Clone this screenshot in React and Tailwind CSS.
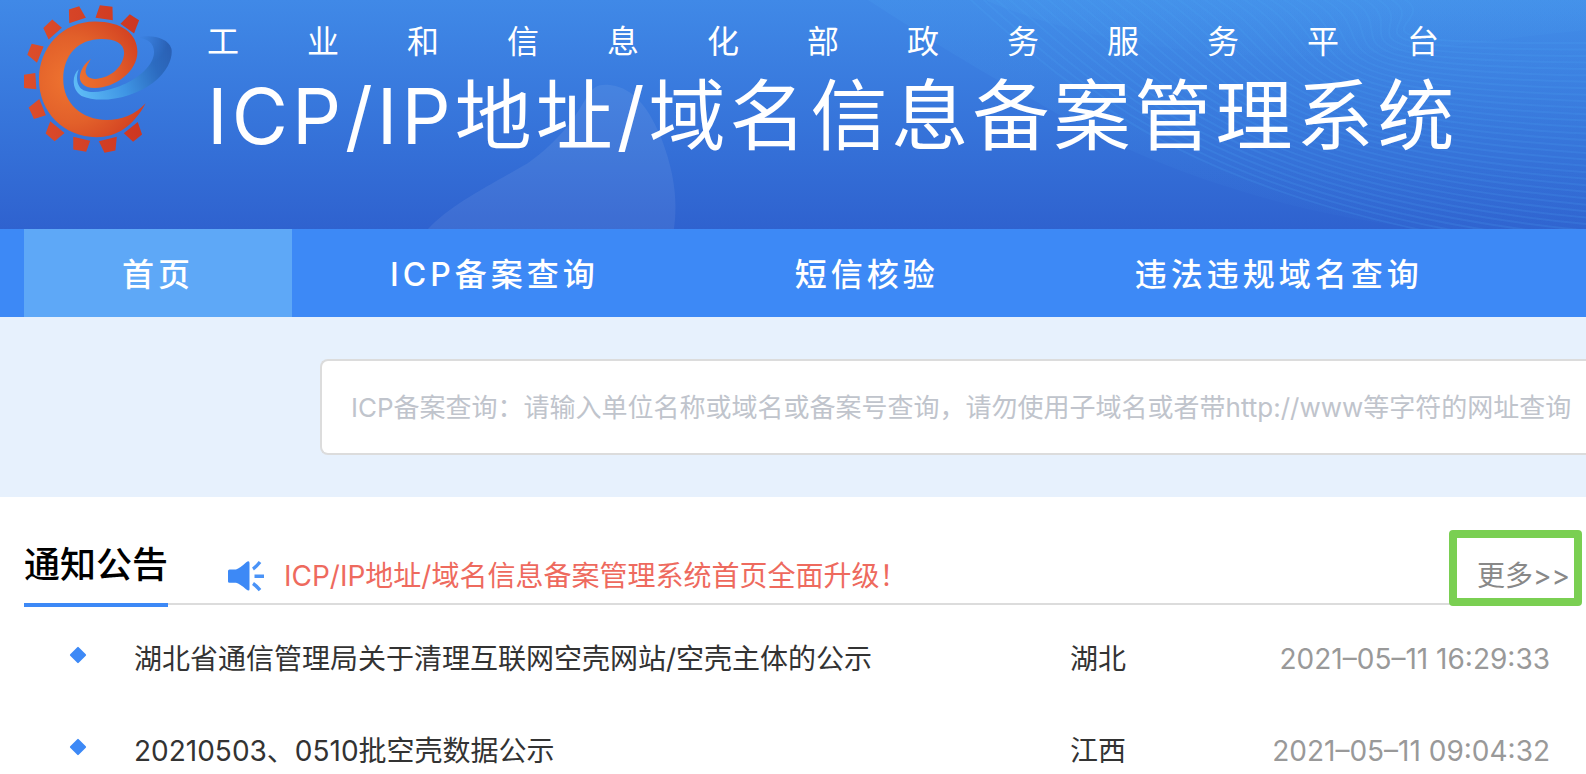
import React from "react";

const NAV_ITEMS = ["首页", "ICP备案查询", "短信核验", "违法违规域名查询"];

const NOTICES = [
  {
    title: "湖北省通信管理局关于清理互联网空壳网站/空壳主体的公示",
    region: "湖北",
    time: "2021–05–11 16:29:33",
  },
  {
    title: "20210503、0510批空壳数据公示",
    region: "江西",
    time: "2021–05–11 09:04:32",
  },
];

// Gear teeth around the "e"
const TEETH = [
  "207,28 238,18 258,53 208,69",
  "300,15 338,20 339,60 287,53",
  "390,42 418,60 403,100 362,71",
  "130,84 157,58 186,83 146,118",
  "95,131 131,139 111,188 82,164",
  "72,224 106,219 109,268 72,264",
  "86,323 118,297 138,346 102,357",
  "151,364 194,399 164,424 137,401",
  "220,411 271,423 259,456 220,449",
  "297,424 351,411 347,452 314,459",
  "372,400 414,366 427,404 400,426",
];

const Logo = () => (
  <svg viewBox="72 12 448 450" className="w-[149px] h-[150px] shrink-0" aria-hidden="true">
    <defs>
      <radialGradient id="body" gradientUnits="userSpaceOnUse" cx="210" cy="240" r="260">
        <stop offset="0" stopColor="#ef7430" />
        <stop offset="0.5" stopColor="#e2602a" />
        <stop offset="1" stopColor="#cf3a20" />
      </radialGradient>
      <linearGradient id="teeth" gradientUnits="userSpaceOnUse" x1="72" y1="240" x2="430" y2="240">
        <stop offset="0" stopColor="#dc4e2b" />
        <stop offset="1" stopColor="#cd3621" />
      </linearGradient>
      <linearGradient id="swoosh" gradientUnits="userSpaceOnUse" x1="220" y1="260" x2="516" y2="150">
        <stop offset="0" stopColor="#5fbdf7" />
        <stop offset="0.45" stopColor="#3f95e4" />
        <stop offset="0.8" stopColor="#2c6bc0" />
        <stop offset="1" stopColor="#2a60b4" />
      </linearGradient>
      <radialGradient id="fade" gradientUnits="userSpaceOnUse" cx="412" cy="106" r="95">
        <stop offset="0.1" stopColor="#000" />
        <stop offset="1" stopColor="#fff" />
      </radialGradient>
      <mask id="swoosh-mask">
        <rect x="0" y="0" width="600" height="500" fill="url(#fade)" />
      </mask>
    </defs>
    {TEETH.map((points) => (
      <polygon key={points} points={points} fill="url(#teeth)" />
    ))}
    <path
      fill="url(#swoosh)"
      mask="url(#swoosh-mask)"
      d="M237 208 C215 225 215 270 245 288 C300 312 400 295 460 248 C510 210 520 165 515 145 C505 115 460 102 412 112 C445 115 464 130 463 158 C460 205 400 245 350 262 C300 280 255 282 240 262 C228 245 230 225 237 208Z"
    />
    <path
      fill="url(#body)"
      d="M438 310 C400 380 350 412 290 412 C190 412 117 335 117 238 C117 140 190 64 285 64 C365 64 413 100 413 155 C413 215 345 264 285 264 C250 264 238 245 240 228 C243 205 260 185 273 177 C262 195 255 208 258 220 C262 235 280 240 300 235 C340 228 372 195 373 158 C373 130 345 117 305 117 C235 117 190 165 190 238 C190 310 245 360 320 360 C365 360 405 345 438 310Z"
    />
  </svg>
);

// Mesh of thin curves fanning out to the right
const WAVES = Array.from({ length: 34 }, (_, i) => {
  const t = i / 33;
  const x = 960 + 420 * t;
  return `M${x} -10 C${x + 110} ${90 - 70 * t} ${1200 + 60 * t} ${215 - 170 * t} 1600 ${258 - 215 * t}`;
});

const HeaderArt = () => (
  <svg
    viewBox="0 0 1586 229"
    preserveAspectRatio="none"
    className="absolute inset-0 w-full h-full"
    aria-hidden="true"
  >
    <defs>
      <linearGradient id="glow" x1="0" y1="0" x2="0" y2="1">
        <stop offset="0" stopColor="#4fa8f2" stopOpacity="0.16" />
        <stop offset="1" stopColor="#4fa8f2" stopOpacity="0.03" />
      </linearGradient>
    </defs>
    <path
      fill="#fff"
      fillOpacity="0.07"
      d="M428 229 C450 205 490 185 528 163 C560 140 575 118 586 98 C594 85 600 84 610 85 C635 88 650 110 662 140 C674 172 678 200 674 229Z"
    />
    <path fill="url(#glow)" d="M868 0 C930 40 975 68 1030 98 C1150 170 1290 215 1430 229 H1586 V0Z" />
    <path fill="url(#glow)" d="M985 0 C1060 32 1160 52 1260 56 C1380 60 1480 40 1586 30 V0Z" />
    <g fill="none" stroke="#4ba6f2" strokeWidth="2" strokeOpacity="0.18">
      {WAVES.map((d) => (
        <path key={d} d={d} />
      ))}
    </g>
  </svg>
);

const Megaphone = () => (
  <svg viewBox="0 0 36 32" className="w-9 h-8 shrink-0" aria-hidden="true">
    <path
      fill="#3d89f6"
      d="M1.5 9.5H8Q12 8 18 2.4Q21.5 0 21.5 3V29Q21.5 32 18 29.2Q12 24 8 22.8H1.5Q0 22.8 0 21.5V11Q0 9.5 1.5 9.5Z"
    />
    <path
      stroke="#4a93f7"
      strokeWidth="3.4"
      fill="none"
      d="M25 9Q28 7 32 2M26.5 16.2H36M25 23.5Q28 25.5 32 30.2"
    />
  </svg>
);

const App = () => (
  <div className="overflow-hidden bg-white font-[Inter,'Noto_Sans_CJK_SC',sans-serif]">
    <header className="relative h-[229px] bg-linear-to-b from-[#4089e7] to-[#2f62cf]">
      <HeaderArt />
      <div className="relative flex gap-[34px] pl-6 pt-1 text-white">
        <Logo />
        <div className="pt-4">
          <p className="w-[1232px] text-[32px] leading-[44px] [text-align-last:justify]">
            工业和信息化部政务服务平台
          </p>
          <h1 className="whitespace-nowrap text-[77px] leading-[104px] tracking-[4px]">
            ICP/IP地址/域名信息备案管理系统
          </h1>
        </div>
      </div>
    </header>

    <nav className="flex h-22 bg-[#3d89f6] pl-6">
      {NAV_ITEMS.map((item, i) => (
        <a
          key={item}
          href="#"
          className={`flex items-center whitespace-nowrap px-[98px] pt-1 text-[32px] font-medium tracking-[4px] text-white ${i === 0 ? "bg-[#5ea8f7]" : ""}`}
        >
          {item}
        </a>
      ))}
    </nav>

    <section className="bg-[#e7f1fd] py-[42px] pl-[320px]">
      <input
        type="text"
        aria-label="ICP备案查询"
        placeholder="ICP备案查询：请输入单位名称或域名或备案号查询，请勿使用子域名或者带http://www等字符的网址查询"
        className="block h-24 w-full rounded-l-lg border-2 border-r-0 border-[#dcdcdc] bg-white pl-[29px] text-[26px] outline-none placeholder:text-[#c0c4cc]"
      />
    </section>

    <main className="pl-6 pr-3 pt-8">
      <div className="flex h-[76px] border-b-2 border-[#dcdcdc]">
        <h2 className="box-content h-[74px] shrink-0 border-b-4 border-[#3d89f6] text-4xl leading-[72px] font-medium text-black">
          通知公告
        </h2>
        <div className="ml-[60px] flex flex-1 items-center gap-5 pt-5">
          <Megaphone />
          <p className="text-[28px] leading-9 text-[#ee6a5e]">ICP/IP地址/域名信息备案管理系统首页全面升级！</p>
        </div>
        <div className="relative flex items-center pr-1 pt-5">
          <a href="#" className="text-[28px] leading-9 text-[#888]">
            更多&gt;&gt;
          </a>
          <span className="pointer-events-none absolute -left-7 -right-2 top-px h-[76px] rounded border-8 border-[#7acf52]" />
        </div>
      </div>

      <ul className="mt-9 flex flex-col gap-14 pr-6 text-[28px] leading-9 text-[#333]">
        {NOTICES.map((notice) => (
          <li key={notice.title} className="flex items-center">
            <span className="mb-2 ml-12 mr-[50px] size-3 rotate-45 rounded-[1px] bg-[#3d89f6]" />
            <a href="#" className="flex-1">
              {notice.title}
            </a>
            <span className="w-[180px]">{notice.region}</span>
            <time className="w-[300px] text-right text-[#999]">{notice.time}</time>
          </li>
        ))}
      </ul>
    </main>
  </div>
);

export default App;
